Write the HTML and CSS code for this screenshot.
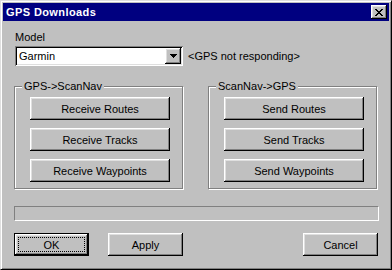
FILE: index.html
```html
<!DOCTYPE html>
<html lang="en">
<head>
    <meta charset="UTF-8">
    <meta name="viewport" content="width=device-width, initial-scale=1.0">
    <title>GPS Downloads</title>
    <link rel="stylesheet" href="styles.css">
</head>
<body>

    <div class="window">
        <div class="titlebar">
            <span class="title">GPS Downloads</span>
            <button class="close-btn">
                <svg width="8" height="7" viewBox="0 0 8 7" shape-rendering="crispEdges">
                    <path fill="#000" d="M0 0h2v1H0zM6 0h2v1H6zM1 1h2v1H1zM5 1h2v1H5zM2 2h4v1H2zM3 3h2v1H3zM2 4h4v1H2zM1 5h2v1H1zM5 5h2v1H5zM0 6h2v1H0zM6 6h2v1H6z"/>
                </svg>
            </button>
        </div>

        <div class="content">
            <div class="model">
                <label class="model-label">Model</label>
                <div class="model-row">
                    <div class="combo">
                        <span class="combo-value">Garmin</span>
                        <span class="combo-btn">
                            <svg width="7" height="4" viewBox="0 0 7 4" shape-rendering="crispEdges">
                                <path fill="#000" d="M0 0h7v1H0zM1 1h5v1H1zM2 2h3v1H2zM3 3h1v1H3z"/>
                            </svg>
                        </span>
                    </div>
                    <span class="status">&lt;GPS not responding&gt;</span>
                </div>
            </div>

            <div class="groups">
                <fieldset class="group">
                    <legend>GPS-&gt;ScanNav</legend>
                    <button class="btn wide">Receive Routes</button>
                    <button class="btn wide">Receive Tracks</button>
                    <button class="btn wide">Receive Waypoints</button>
                </fieldset>
                <fieldset class="group">
                    <legend>ScanNav-&gt;GPS</legend>
                    <button class="btn wide">Send Routes</button>
                    <button class="btn wide">Send Tracks</button>
                    <button class="btn wide">Send Waypoints</button>
                </fieldset>
            </div>

            <div class="progress"></div>

            <div class="actions">
                <button class="btn small default"><span class="focus">OK</span></button>
                <button class="btn small">Apply</button>
                <button class="btn small cancel">Cancel</button>
            </div>
        </div>
    </div>

</body>
</html>
```

FILE: styles.css
```css
* {
    box-sizing: border-box;
    margin: 0;
    padding: 0;
}

body {
    font-family: "Liberation Sans", Arial, sans-serif;
    font-size: 11px;
    line-height: 13px;
    color: #000;
    background: #c0c0c0;
}

.window {
    width: 392px;
    height: 270px;
    background: #c0c0c0;
    border: 1px solid;
    border-color: #dfdfdf #000 #000 #dfdfdf;
    box-shadow: inset 1px 1px #fff, inset -1px -1px #808080;
    padding: 2px;
}

.titlebar {
    display: flex;
    align-items: center;
    justify-content: space-between;
    height: 18px;
    padding: 0 2px 0 3px;
    background: #000080;
}

.title {
    color: #fff;
    font-weight: bold;
    letter-spacing: 0.4px;
    line-height: 18px;
}

.close-btn, .combo-btn {
    display: flex;
    align-items: center;
    justify-content: center;
    background: #c0c0c0;
    border: none;
    box-shadow: inset -1px -1px #000, inset 1px 1px #fff, inset -2px -2px #808080, inset 2px 2px #dfdfdf;
}

.close-btn {
    width: 16px;
    height: 14px;
}

.content {
    padding: 10px 11px 0 11px;
}

.model {
    margin-left: 1px;
}

.model-label {
    display: block;
    margin-bottom: 2px;
}

.model-row {
    display: flex;
    align-items: center;
}

.combo {
    display: flex;
    align-items: center;
    justify-content: space-between;
    width: 168px;
    height: 20px;
    padding: 2px;
    background: #fff;
    box-shadow: inset 1px 1px #808080, inset -1px -1px #fff, inset 2px 2px #000, inset -2px -2px #dfdfdf;
}

.combo-value {
    padding-left: 2px;
}

.combo-btn {
    width: 16px;
    height: 16px;
}

.status {
    margin-left: 5px;
}

.groups {
    display: grid;
    grid-template-columns: 169px 169px;
    column-gap: 25px;
    margin-top: 14px;
}

.group {
    display: flex;
    flex-direction: column;
    gap: 8px;
    min-width: 0;
    padding: 4px 15px 6px 15px;
    border: 1px solid #808080;
    box-shadow: 1px 1px 0 #fff, inset 1px 1px 0 #fff;
}

.group legend {
    margin-left: -8px;
    padding: 0 2px;
    background: #c0c0c0;
    line-height: 13px;
}

.btn {
    display: flex;
    align-items: center;
    justify-content: center;
    height: 23px;
    background: #c0c0c0;
    border: none;
    font-family: inherit;
    font-size: 11px;
    color: #000;
    box-shadow: inset -1px -1px #000, inset 1px 1px #fff, inset -2px -2px #808080, inset 2px 2px #dfdfdf;
}

.wide {
    width: 140px;
}

.small {
    width: 75px;
}

.default {
    padding: 4px;
    box-shadow: inset 0 0 0 1px #000, inset -2px -2px #000, inset 2px 2px #fff, inset -3px -3px #808080, inset 3px 3px #dfdfdf;
}

.focus {
    display: flex;
    align-items: center;
    justify-content: center;
    width: 100%;
    height: 100%;
    border: 1px dotted #000;
}

.progress {
    height: 15px;
    margin-top: 17px;
    margin-right: -1px;
    border: 1px solid;
    border-color: #808080 #fff #fff #808080;
}

.actions {
    display: flex;
    gap: 19px;
    margin-top: 12px;
}

.cancel {
    margin-left: auto;
}
```
